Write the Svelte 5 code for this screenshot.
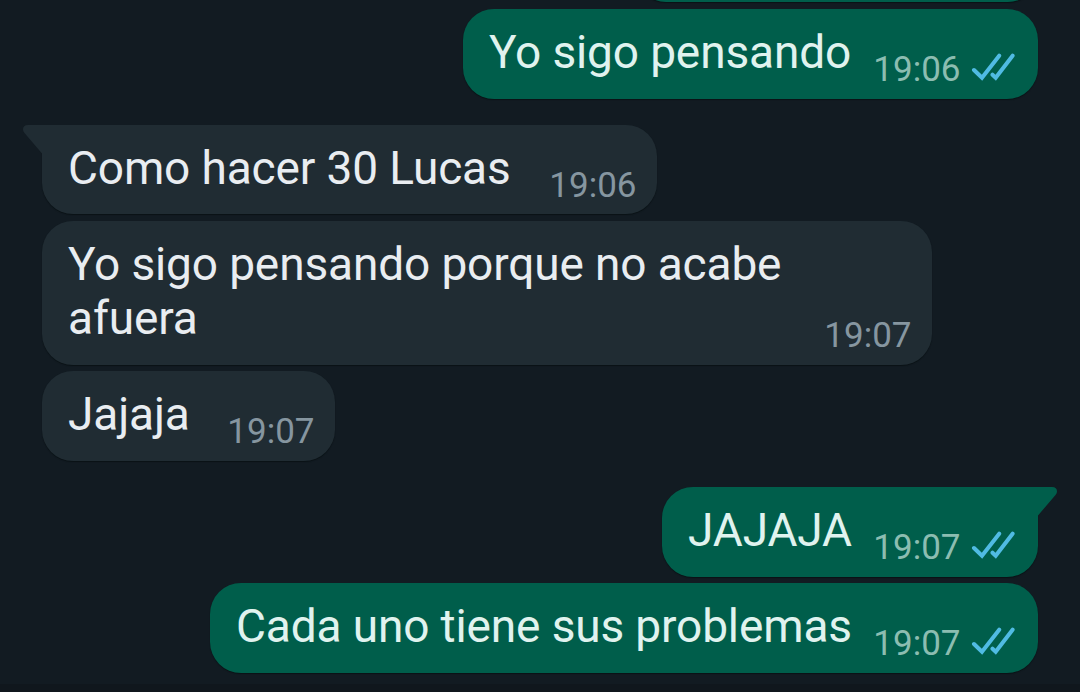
<script>
  const messages = [
    { text: 'Yo sigo pensando', time: '19:06', out: true, width: 575, gap: 7.2 },
    { text: 'Como hacer 30 Lucas', time: '19:06', tail: true, width: 615, gap: 26.4 },
    { text: 'Yo sigo pensando porque no acabe afuera', time: '19:07', width: 890, gap: 6.6, tall: true },
    { text: 'Jajaja', time: '19:07', width: 293, gap: 6.6 },
    { text: 'JAJAJA', time: '19:07', out: true, tail: true, width: 376, gap: 26.6 },
    { text: 'Cada uno tiene sus problemas', time: '19:07', out: true, width: 828, gap: 6.6 }
  ];
</script>

<main>
  <div class="previous"></div>
  {#each messages as m}
    <article class:out={m.out} class:tailed={m.tail} class:tall={m.tall} style="width:{m.width}px;margin-top:{m.gap}px">
      {#if m.tail}
        <svg class="tail" width="24" height="36" viewBox="0 0 24 36">
          <path d="M24 0H5Q0 0 0 4.5Q0 6 1.5 8L19 28.5V36H24Z" />
        </svg>
      {/if}
      <p>{m.text}</p>
      <footer>
        <time>{m.time}</time>
        {#if m.out}
          <svg class="checks" width="44" height="30" viewBox="0 0 44 30">
            <path d="M3 18L11 25.8L28.2 3.7M21.5 22.7L24.7 25.8L41.6 3.7" />
          </svg>
        {/if}
      </footer>
    </article>
  {/each}
  <div class="composer"></div>
</main>

<style>
  :global(body) { margin: 0; background: #121b22; }
  main {
    box-sizing: border-box;
    display: flex;
    flex-direction: column;
    width: 1080px;
    height: 692px;
    padding: 0 42px;
    overflow: hidden;
    background: #121b22;
    font-family: Roboto, sans-serif;
  }
  .previous {
    flex: none;
    align-self: flex-end;
    width: 402px;
    height: 60px;
    margin-top: -58px;
    border-radius: 30px;
    background: #005e4b;
    box-shadow: 0 1px 1px #0a1216;
  }
  article {
    --fill: #202c33;
    position: relative;
    box-sizing: border-box;
    flex: none;
    display: flex;
    justify-content: space-between;
    height: 89.4px;
    padding: 16px 20.5px 0 26px;
    border-radius: 31px;
    background: var(--fill);
    color: #e9edf1;
    box-shadow: 0 1px 1px #0a1216;
  }
  article.out { --fill: #005e4b; align-self: flex-end; padding-right: 23.5px; color: #e0f3ef; }
  article.tailed { border-top-left-radius: 0; }
  article.out.tailed { border-top-left-radius: 31px; border-top-right-radius: 0; }
  article.tall { height: 143.7px; }
  p { margin: 0.25px 0 0; font-size: 46px; line-height: 54px; letter-spacing: -0.13px; white-space: nowrap; }
  .tall p { flex: 0 0 730px; white-space: normal; }
  footer { display: flex; align-items: flex-end; height: 66px; color: #8696a0; }
  .tall footer { height: 120px; }
  .out footer { color: #8cbdb1; }
  time { font-size: 35px; line-height: 42px; }
  .checks { margin: 0 0 9px 10px; }
  .checks path { fill: none; stroke: #50bbe3; stroke-width: 4; stroke-linecap: round; }
  .tail { position: absolute; top: 0; left: -19px; fill: var(--fill); }
  .out .tail { left: auto; right: -19px; transform: scaleX(-1); }
  .composer { flex: none; height: 8px; margin: 11.3px -42px 0; background: #10171d; }
</style>
